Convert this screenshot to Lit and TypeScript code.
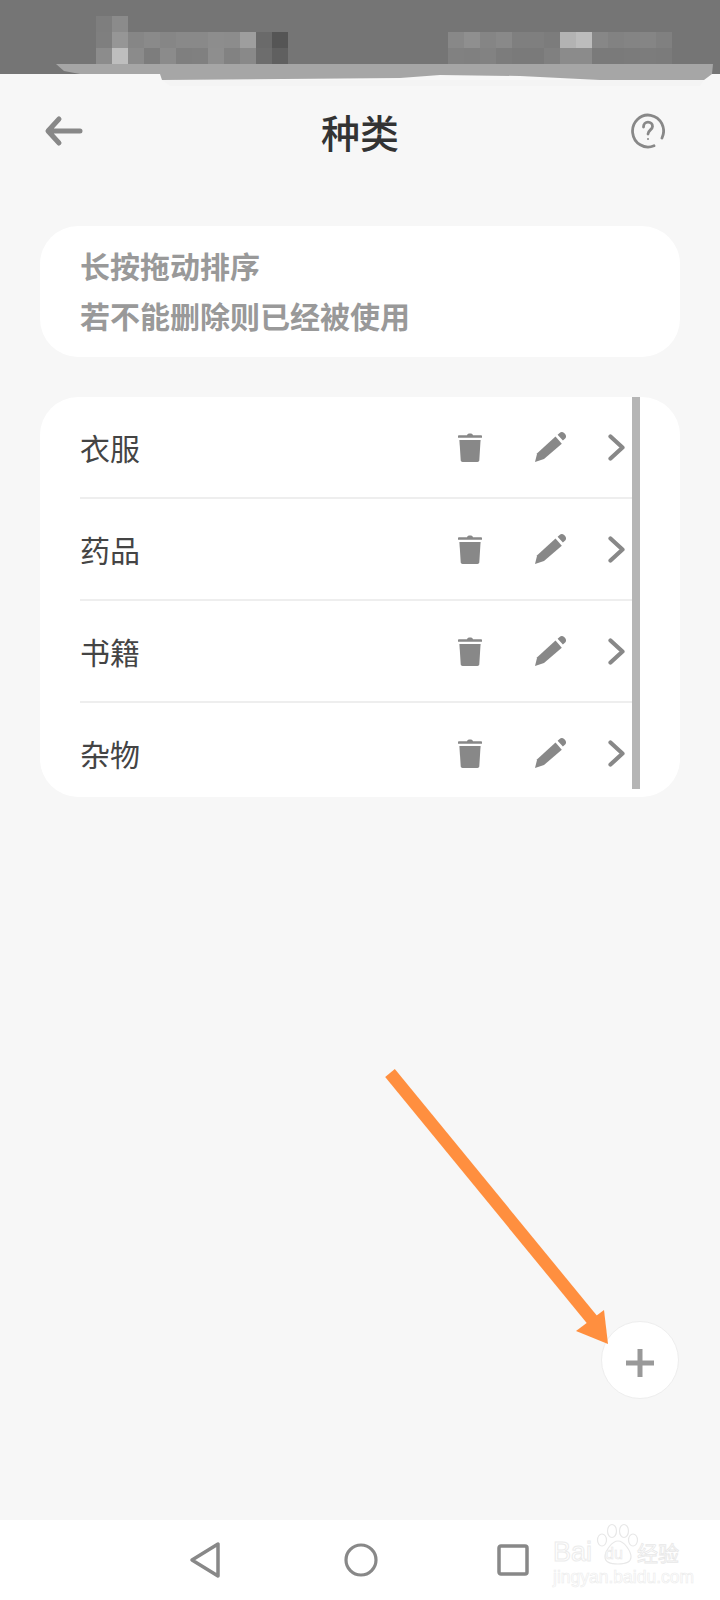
import { LitElement, html, css, svg } from "lit";
import { customElement } from "lit/decorators.js";

const LEFT_MOSAIC = [
  "7e8b7a7a7a7a7a7a7a7a7a7a".match(/../g)!,
  "7f96868a8689898d8c9e6a55".match(/../g)!,
  "8cbe8b7d8b7f808e82896d60".match(/../g)!,
];
const RIGHT_MOSAIC = [
  "888f85897f7f7cb3bc87828485807d".match(/../g)!.slice(0, 14),
  "8180827c7a7a808b8b7a7a7b7c7b7a".match(/../g)!.slice(0, 14),
];

const trash = svg`<path d="M9 3.2c.2-1 1.3-1.7 3-1.7s2.800.7 3 1.700h8.200c.4 0 .8.300.8.800v1.700H0V4c0-.5.4-.8.800-.8z"/><path d="M1.400 8h21.200l-1.300 20.300c-.1 1-.9 1.700-1.800 1.700H4.500c-.9 0-1.700-.7-1.800-1.700z"/>`;
const pencil = svg`<path d="M0 30l2.200-8.800L20.500 4.600l6.300 7.200L9 27z"/><path d="M22.600 2.800l2-1.900c1.300-1.200 3.200-1.200 4.500.1l1 1.100c1.300 1.400 1.200 3.500-.2 4.700l-2 1.800z"/>`;

@customElement("app-root")
export class AppRoot extends LitElement {
  static styles = css`
    :host {
      display: block;
      position: relative;
      width: 720px;
      height: 1600px;
      overflow: hidden;
      background: #f7f7f7;
      font-family: "Noto Sans CJK SC", "Noto Sans", sans-serif;
    }
    .page { display: flex; flex-direction: column; height: 1600px; }
    .status {
      height: 74px;
      flex: none;
      background: #757575;
      display: flex;
      justify-content: space-between;
      align-items: flex-start;
      padding: 16px 48px 0 96px;
      box-sizing: border-box;
    }
    .mosaic { display: grid; grid-auto-rows: 16px; }
    .mosaic.left { grid-template-columns: repeat(12, 16px); }
    .mosaic.right { grid-template-columns: repeat(14, 16px); margin-top: 16px; }
    .mosaic i { display: block; }
    .smear { position: absolute; left: 0; top: 60px; }
    .header {
      height: 152px;
      flex: none;
      display: flex;
      align-items: flex-start;
      justify-content: space-between;
      padding: 41px 55px 0 44px;
      box-sizing: border-box;
      position: relative;
    }
    .help { margin-top: -2px; }
    .title {
      position: absolute;
      left: 0;
      right: 0;
      top: 31px;
      text-align: center;
      font-size: 39px;
      line-height: 52px;
      font-weight: 500;
      color: #333;
    }
    .card {
      margin: 0 40px;
      background: #fff;
      border-radius: 38px;
      flex: none;
    }
    .tips {
      height: 131px;
      box-sizing: border-box;
      padding: 14px 40px 0;
      color: #999;
      font-size: 30px;
      font-weight: 700;
      line-height: 50px;
    }
    .list {
      height: 400px;
      margin-top: 40px;
      overflow: hidden;
      position: relative;
    }
    .row {
      height: 100px;
      margin: 0 40px;
      border-bottom: 2px solid #eeeeee;
      display: flex;
      align-items: center;
      color: #444;
      font-size: 30px;
    }
    .name { width: 378px; margin-top: -1px; }
    .trash { width: 24px; height: 30px; fill: #888; margin-right: 53px; }
    .pencil { width: 31px; height: 30px; fill: #888; margin-right: 42px; }
    .chev { width: 17px; height: 27px; }
    .bar {
      position: absolute;
      left: 592px;
      top: 0;
      width: 8px;
      height: 392px;
      background: #b5b5b5;
    }
    .spacer { flex: 1; }
    .fab-line {
      flex: none;
      display: flex;
      justify-content: flex-end;
      padding-right: 41px;
      margin-bottom: 121px;
    }
    .fab {
      width: 76px;
      height: 76px;
      border-radius: 50%;
      background: #fff;
      border: 1px solid #eeeeee;
      display: flex;
      align-items: center;
      justify-content: center;
    }
    .plus { margin-top: 6px; }
    .nav {
      flex: none;
      height: 80px;
      background: #fff;
      position: relative;
      display: flex;
      align-items: center;
      padding: 0 0 0 189px;
      box-sizing: border-box;
    }
    .nav svg { flex: none; }
    .circle { margin-left: 120px; }
    .square { margin-left: 118px; }
    .arrow { position: absolute; left: 0; top: 0; pointer-events: none; }
    .mark {
      position: absolute;
      left: 553px;
      top: 3px;
      width: 130px;
      height: 62px;
    }
    .mark svg { position: absolute; left: 42px; top: 0; }
    .bai {
      position: absolute;
      left: 0;
      top: 14px;
      font-family: "Liberation Sans", sans-serif;
      font-size: 27px;
      line-height: 30px;
      color: #fff;
      -webkit-text-stroke: 1px #ececec;
    }
    .du {
      position: absolute;
      left: 52px;
      top: 21px;
      font-family: "Liberation Sans", sans-serif;
      font-size: 16px;
      line-height: 20px;
      color: #fff;
      -webkit-text-stroke: 0.6px #e8e8e8;
    }
    .jy {
      position: absolute;
      left: 84px;
      top: 16px;
      font-size: 21px;
      line-height: 26px;
      color: #fff;
      -webkit-text-stroke: 0.8px #e8e8e8;
      white-space: nowrap;
    }
    .site {
      position: absolute;
      left: 0;
      top: 44px;
      font-family: "Liberation Sans", sans-serif;
      font-size: 17.500px;
      line-height: 20px;
      color: #fff;
      -webkit-text-stroke: 0.6px #ececec;
      white-space: nowrap;
    }
  `;

  private mosaic(rows: string[][], cls: string) {
    return html`<div class="mosaic ${cls}">
      ${rows.flat().map((v, i) =>
        cls === "left" && i < 12 && i > 1
          ? html`<i></i>`
          : html`<i style="background:#${v}${v}${v}"></i>`
      )}
    </div>`;
  }

  private row(name: string) {
    return html`<div class="row">
      <div class="name">${name}</div>
      <svg class="trash" viewBox="0 0 24 30">${trash}</svg>
      <svg class="pencil" viewBox="0 0 31 30">${pencil}</svg>
      <svg class="chev" viewBox="0 0 17 27" fill="none" stroke="#888" stroke-width="4.200" stroke-linecap="round" stroke-linejoin="round"><path d="M2.500 2.500l12 11-12 11"/></svg>
    </div>`;
  }

  render() {
    return html`
      <div class="page">
        <div class="status">
          ${this.mosaic(LEFT_MOSAIC, "left")}
          ${this.mosaic(RIGHT_MOSAIC, "right")}
        </div>
        <svg class="smear" width="720" height="40" viewBox="0 60 720 40">
          <path d="M56 64H713L712 74 704 80 600 80 520 76 440 75 400 78 162 80 160 74 80 74 64 71z" fill="#a6a6a6"/>
          <path d="M162 80L704 80 700 86 170 86z" fill="#f4f4f4"/>
        </svg>
        <div class="header">
          <svg width="40" height="32" viewBox="0 0 40 32" fill="none" stroke="#888" stroke-width="5" stroke-linecap="round" stroke-linejoin="round">
            <path d="M36 16H5M15 4L4 16l11 12"/>
          </svg>
          <div class="title">种类</div>
          <svg class="help" width="34" height="36" viewBox="0 0 34 36" fill="none" stroke="#888" stroke-width="2.800" stroke-linecap="round">
            <path d="M23 32.800A15.500 16 0 1 1 31 25"/>
            <path d="M12.500 14c0-3 2-4.800 4.500-4.800s4.500 1.700 4.500 4.200c0 3.300-4.500 3.700-4.500 7.600"/>
            <circle cx="17" cy="26" r="1" fill="#888" stroke="none"/>
          </svg>
        </div>
        <div class="card tips">
          <div>长按拖动排序</div>
          <div>若不能删除则已经被使用</div>
        </div>
        <div class="card list">
          ${this.row("衣服")}${this.row("药品")}${this.row("书籍")}${this.row("杂物")}
          <div class="bar"></div>
        </div>
        <div class="spacer"></div>
        <div class="fab-line">
          <div class="fab">
            <svg class="plus" width="28" height="28" viewBox="0 0 28 28" fill="#999"><path d="M11.500 0h5v11.500H28v5H16.500V28h-5V16.500H0v-5h11.500z"/></svg>
          </div>
        </div>
        <div class="nav">
          <svg width="34" height="38" viewBox="0 0 34 38" fill="none" stroke="#888" stroke-width="3.500" stroke-linejoin="round"><path d="M29 3v32L3 19z"/></svg>
          <svg class="circle" width="36" height="36" viewBox="0 0 36 36" fill="none" stroke="#888" stroke-width="3.200"><circle cx="18" cy="18" r="15"/></svg>
          <svg class="square" width="32" height="32" viewBox="0 0 32 32" fill="none" stroke="#888" stroke-width="3.500" stroke-linejoin="round"><rect x="2" y="2" width="28" height="28" rx="2"/></svg>
          <div class="mark">
            <svg width="46" height="46" viewBox="0 0 46 46" fill="#fff" stroke="#e8e8e8" stroke-width="1.200">
              <ellipse cx="7" cy="17" rx="4.500" ry="6"/>
              <ellipse cx="17" cy="8" rx="4.500" ry="6.500"/>
              <ellipse cx="29" cy="8" rx="4.500" ry="6.500"/>
              <ellipse cx="38" cy="17" rx="4.500" ry="6"/>
              <path d="M23 18c6 0 13 10 13 16 0 5-5 7-13 7s-13-2-13-7c0-6 7-16 13-16z"/>
            </svg>
            <div class="bai">Bai</div>
            <div class="du">du</div>
            <div class="jy">经验</div>
            <div class="site">jingyan.baidu.com</div>
          </div>
        </div>
      </div>
      <svg class="arrow" width="720" height="1600" viewBox="0 0 720 1600">
        <path d="M390 1073L594 1322" stroke="#ff8f3f" stroke-width="12.500" fill="none"/>
        <path d="M608 1344L576 1331 604 1310z" fill="#ff8f3f"/>
      </svg>
    `;
  }
}
